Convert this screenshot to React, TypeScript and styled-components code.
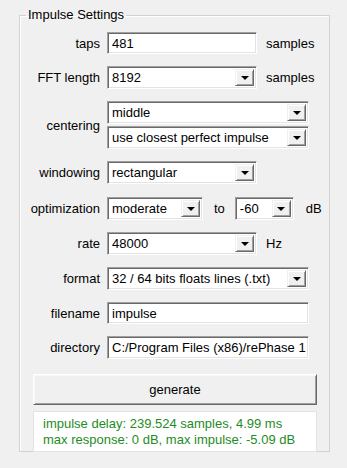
import React from "react";
import styled, { createGlobalStyle } from "styled-components";

const Global = createGlobalStyle`
  html, body { margin: 0; padding: 0; background: #f0f0f0; }
  body { font-family: "Liberation Sans", Arial, sans-serif; font-size: 13px; color: #000; }
  #root { width: 347px; height: 468px; overflow: hidden; }
`;

const Page = styled.div`
  padding: 8px 17px 0 19px;
`;

const Group = styled.fieldset`
  margin: 0;
  padding: 0;
  width: 311px;
  height: 444px;
  box-sizing: border-box;
  border: 1px solid #d2d2d2;
  box-shadow: inset 1px 1px 0 #ffffff;
  border-radius: 0;
  min-width: 0;
`;

const Legend = styled.legend`
  margin-left: 6px;
  padding: 0 2px 0 2px;
  font-size: 13px;
  line-height: 14px;
  color: #000;
`;

const Body = styled.div`
  display: flex;
  flex-direction: column;
  gap: 12px;
  padding-top: 10px;
`;

const Row = styled.div<{ $extra?: number }>`
  display: flex;
  align-items: center;
  margin-top: ${(p) => p.$extra ?? 0}px;
`;

const Label = styled.div`
  width: 80px;
  margin-right: 7px;
  text-align: right;
  white-space: nowrap;
`;

const Stack = styled.div`
  display: flex;
  flex-direction: column;
  gap: 2px;
`;

const Sunken = styled.div<{ $w: number; $h?: number }>`
  width: ${(p) => p.$w}px;
  height: ${(p) => p.$h ?? 23}px;
  box-sizing: border-box;
  background: #fff;
  border: 1px solid;
  border-color: #a0a0a0 #ffffff #ffffff #a0a0a0;
  box-shadow: inset 1px 1px 0 #696969, inset -1px -1px 0 #e3e3e3;
  display: flex;
  align-items: center;
  padding-left: 4px;
  overflow: hidden;
  white-space: nowrap;
`;

const Value = styled.span`
  flex: 1;
  min-width: 0;
  overflow: hidden;
  white-space: nowrap;
`;

const DropButton = styled.div`
  width: 19px;
  height: 17px;
  margin-right: 2px;
  box-sizing: border-box;
  background: #f0f0f0;
  border: 1px solid;
  border-color: #f0f0f0 #696969 #696969 #f0f0f0;
  box-shadow: inset 1px 1px 0 #ffffff, inset -1px -1px 0 #a0a0a0;
  display: flex;
  align-items: center;
  justify-content: center;
  flex: none;
`;

const Arrow = styled.div`
  width: 0;
  height: 0;
  border-left: 4px solid transparent;
  border-right: 4px solid transparent;
  border-top: 4px solid #000;
  margin-top: 1px;
`;

const Suffix = styled.div<{ $gap?: number }>`
  margin-left: ${(p) => p.$gap ?? 9}px;
  white-space: nowrap;
`;

const Footer = styled.div`
  display: flex;
  flex-direction: column;
  gap: 6px;
  margin-top: 3px;
  padding-left: 13px;
`;

const Button = styled.div`
  width: 284px;
  height: 31px;
  box-sizing: border-box;
  background: #f0f0f0;
  border: 1px solid;
  border-color: #ffffff #696969 #696969 #ffffff;
  box-shadow: inset 1px 1px 0 #f8f8f8, inset -1px -1px 0 #a0a0a0;
  display: flex;
  align-items: center;
  justify-content: center;
`;

const Result = styled.div`
  width: 284px;
  height: 41px;
  box-sizing: border-box;
  background: #fff;
  border: 1px solid #e3e3e3;
  color: #1e8c1e;
  padding: 4px 0 0 9px;
  line-height: 16px;
`;

const Line = styled.div`
  white-space: nowrap;
`;

const Combo = ({ w, value }: { w: number; value: string }) => (
  <Sunken $w={w}>
    <Value>{value}</Value>
    <DropButton>
      <Arrow />
    </DropButton>
  </Sunken>
);

export default function App() {
  return (
    <>
      <Global />
      <Page>
        <Group>
          <Legend>Impulse Settings</Legend>
          <Body>
            <Row>
              <Label>taps</Label>
              <Sunken $w={150} $h={22}>
                <Value>481</Value>
              </Sunken>
              <Suffix>samples</Suffix>
            </Row>
            <Row>
              <Label>FFT length</Label>
              <Combo w={150} value="8192" />
              <Suffix>samples</Suffix>
            </Row>
            <Row>
              <Label>centering</Label>
              <Stack>
                <Combo w={202} value="middle" />
                <Combo w={202} value="use closest perfect impulse" />
              </Stack>
            </Row>
            <Row>
              <Label>windowing</Label>
              <Combo w={150} value="rectangular" />
            </Row>
            <Row $extra={1}>
              <Label>optimization</Label>
              <Combo w={96} value="moderate" />
              <Suffix $gap={11}>to</Suffix>
              <Suffix $gap={10}>
                <Combo w={59} value="-60" />
              </Suffix>
              <Suffix $gap={12}>dB</Suffix>
            </Row>
            <Row>
              <Label>rate</Label>
              <Combo w={150} value="48000" />
              <Suffix>Hz</Suffix>
            </Row>
            <Row>
              <Label>format</Label>
              <Combo w={202} value="32 / 64 bits floats lines (.txt)" />
            </Row>
            <Row>
              <Label>filename</Label>
              <Sunken $w={202} $h={22}>
                <Value>impulse</Value>
              </Sunken>
            </Row>
            <Row>
              <Label>directory</Label>
              <Sunken $w={202}>
                <Value>C:/Program Files (x86)/rePhase 1</Value>
              </Sunken>
            </Row>
            <Footer>
              <Button>generate</Button>
              <Result>
                <Line>impulse delay: 239.524 samples, 4.99 ms</Line>
                <Line>max response: 0 dB, max impulse: -5.09 dB</Line>
              </Result>
            </Footer>
          </Body>
        </Group>
      </Page>
    </>
  );
}
